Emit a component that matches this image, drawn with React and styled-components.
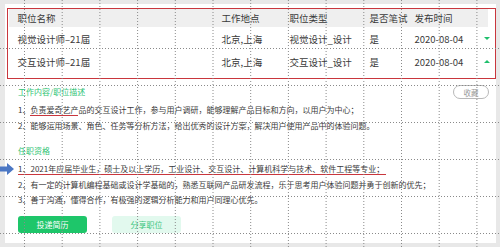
import React from 'react';
import styled, { createGlobalStyle } from 'styled-components';

const jobs = [
  { name: '视觉设计师–21届', place: '北京,上海', type: '视觉设计_设计', exam: '是', date: '2020-08-04', open: true },
  { name: '交互设计师–21届', place: '北京,上海', type: '交互设计_设计', exam: '是', date: '2020-08-04', open: false },
];

const vLines = Array.from({ length: 13 }, (_, i) => 24.5 + i * 37.7);
const hLines = Array.from({ length: 6 }, (_, i) => 48.5 + i * 37);

export default function App() {
  return (
    <>
      <GlobalStyle />
      <Page>
        <Panel>
          <TableBox>
            <Row header>
              <Cell>职位名称</Cell>
              <Cell>工作地点</Cell>
              <Cell>职位类型</Cell>
              <Cell>是否笔试</Cell>
              <Cell>发布时间</Cell>
              <Cell />
            </Row>
            {jobs.map((job) => (
              <Row key={job.name}>
                <Cell>{job.name}</Cell>
                <Cell>{job.place}</Cell>
                <Cell>{job.type}</Cell>
                <Cell>{job.exam}</Cell>
                <Cell>{job.date}</Cell>
                <Cell>
                  <Caret up={!job.open} />
                </Cell>
              </Row>
            ))}
          </TableBox>

          <Detail>
            <CollectButton>收藏</CollectButton>
            <SectionTitle>工作内容/职位描述</SectionTitle>
            <Line>
              1、<Marked>负责爱奇艺产</Marked>品的交互设计工作，参与用户调研，能够理解产品目标和方向，以用户为中心；
            </Line>
            <Line>2、能够运用场景、角色、任务等分析方法，给出优秀的设计方案，解决用户使用产品中的体验问题。</Line>

            <SectionTitle second>任职资格</SectionTitle>
            <Line>
              <Pointer viewBox="0 0 14 12">
                <path d="M0 3.5 H7 V0 L14 6 L7 12 V8.5 H0 Z" fill="#4b77c4" />
              </Pointer>
              <Marked wide>1、2021年应届毕业生，硕士及以上学历，工业设计、交互设计、计算机科学与技术、软件工程等专业；</Marked>
            </Line>
            <Line>2、有一定的计算机编程基础或设计学基础的，熟悉互联网产品研发流程，乐于思考用户体验问题并勇于创新的优先；</Line>
            <Line>3、善于沟通，懂得合作，有极强的逻辑分析能力和用户同理心优先。</Line>

            <Actions>
              <ActionButton primary>投递简历</ActionButton>
              <ActionButton>分享职位</ActionButton>
            </Actions>
          </Detail>
        </Panel>

        <GridOverlay width="500" height="247">
          {vLines.map((x) => (
            <line key={'v' + x} x1={x} y1="0" x2={x} y2="247" />
          ))}
          {hLines.map((y) => (
            <line key={'h' + y} x1="0" y1={y} x2="500" y2={y} />
          ))}
        </GridOverlay>
      </Page>
    </>
  );
}

/******************** styled components ************************/

const GlobalStyle = createGlobalStyle`
  body {
    margin: 0;
    background: #e8e8e8;
    font-family: "Noto Sans CJK SC", "Noto Sans", sans-serif;
    color: #333;
  }
`;

const Page = styled.div`
  position: relative;
  width: 500px;
  height: 247px;
  box-sizing: border-box;
  padding: 4px 4px 4px 5px;
  background: #e8e8e8;
  overflow: hidden;
`;

const Panel = styled.div`
  height: 239px;
  background: #fff;
  padding: 4px 0 0 2px;
  box-sizing: border-box;
`;

const TableBox = styled.div`
  border: 1.5px solid #c9363d;
  height: 71px;
  box-sizing: border-box;
  padding: 0 7px 0 1px;
`;

const Row = styled.div`
  display: grid;
  grid-template-columns: 204px 68px 80px 45px 66px 1fr;
  align-items: center;
  height: ${(p) => (p.header ? '18px' : '23px')};
  padding-left: 8.5px;
  background: ${(p) => (p.header ? '#efefef' : 'transparent')};
  font-size: 9.5px;
  color: #3a3a3a;
`;

const Cell = styled.div`
  white-space: nowrap;
  display: flex;
  align-items: center;
  justify-content: flex-start;
  min-height: 10px;
`;

const Caret = styled.span`
  display: block;
  width: 0;
  height: 0;
  margin-left: 3px;
  border-left: 3px solid transparent;
  border-right: 3px solid transparent;
  ${(p) => (p.up ? 'border-bottom: 3.5px solid #1fbf6c;' : 'border-top: 3.5px solid #1fbf6c;')}
`;

const Detail = styled.div`
  position: relative;
  padding: 6px 0 0 11px;
`;

const CollectButton = styled.div`
  position: absolute;
  right: 7px;
  top: 6px;
  width: 34px;
  height: 12px;
  border: 1px solid #b8b8b8;
  border-radius: 7px;
  font-size: 7.5px;
  color: #999;
  display: flex;
  align-items: center;
  justify-content: center;
`;

const SectionTitle = styled.div`
  font-size: 8px;
  line-height: 10px;
  color: #2fc474;
  margin-top: ${(p) => (p.second ? '13px' : '2px')};
  margin-bottom: 5px;
`;

const Line = styled.div`
  position: relative;
  font-size: 8px;
  line-height: 15.5px;
  white-space: nowrap;
  color: #3a3a3a;
`;

const Marked = styled.span`
  display: inline-block;
  line-height: 11px;
  border-bottom: 1.5px solid #c9363d;
  ${(p) => (p.wide ? 'padding-right: 2px;' : '')}
`;

const Pointer = styled.svg`
  position: absolute;
  left: -18px;
  top: 2px;
  width: 14px;
  height: 12px;
`;

const Actions = styled.div`
  display: flex;
  gap: 25px;
  margin-top: 8px;
`;

const ActionButton = styled.div`
  width: 69px;
  height: 17px;
  border-radius: 3px;
  font-size: 8px;
  display: flex;
  align-items: center;
  justify-content: center;
  background: ${(p) => (p.primary ? '#1ec66a' : '#e2f9ee')};
  color: ${(p) => (p.primary ? '#fff' : '#3cc67e')};
`;

const GridOverlay = styled.svg`
  position: absolute;
  left: 0;
  top: 0;
  pointer-events: none;
  line {
    stroke: #8a8a8a;
    stroke-width: 1;
    stroke-dasharray: 1 2;
  }
`;
